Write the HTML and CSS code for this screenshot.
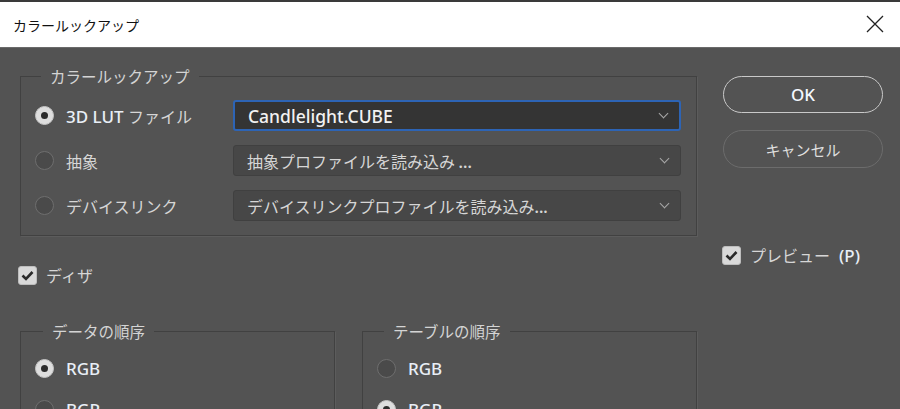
FILE: index.html
```html
<!DOCTYPE html>
<html lang="ja">
<head>
<meta charset="utf-8">
<title>カラールックアップ</title>
<link rel="stylesheet" href="styles.css">
</head>
<body>
<div class="titlebar">
  <span class="title">カラールックアップ</span>
  <svg class="close" width="18" height="18" viewBox="0 0 18 18"><path d="M1 1 L17 17 M17 1 L1 17" stroke="#222" stroke-width="1.3" fill="none"/></svg>
</div>
<div class="dialog">
  <div class="main">
    <fieldset class="group lut">
      <legend>カラールックアップ</legend>
      <div class="lut-grid">
        <label class="opt"><span class="radio on"></span><span><span class="lat">3D LUT </span>ファイル</span></label>
        <div class="select focus"><span class="lat">Candlelight.CUBE</span><span class="chev"></span></div>
        <label class="opt"><span class="radio"></span>抽象</label>
        <div class="select"><span>抽象プロファイルを読み込み <span class="lat dots">...</span></span><span class="chev"></span></div>
        <label class="opt"><span class="radio"></span>デバイスリンク</label>
        <div class="select"><span>デバイスリンクプロファイルを読み込み<span class="lat dots">...</span></span><span class="chev"></span></div>
      </div>
    </fieldset>
    <label class="check-row dither"><span class="checkbox"><svg width="13" height="11" viewBox="0 0 13 11"><path d="M1.5 5.5 L5 9 L11.5 2" stroke="#2a2a2a" stroke-width="2.6" fill="none"/></svg></span>ディザ</label>
    <div class="orders">
      <fieldset class="group order data">
        <legend>データの順序</legend>
        <label class="opt"><span class="radio on"></span><span class="lat">RGB</span></label>
        <label class="opt"><span class="radio"></span><span class="lat">BGR</span></label>
      </fieldset>
      <fieldset class="group order table">
        <legend>テーブルの順序</legend>
        <label class="opt"><span class="radio"></span><span class="lat">RGB</span></label>
        <label class="opt"><span class="radio on"></span><span class="lat">BGR</span></label>
      </fieldset>
    </div>
  </div>
  <div class="side">
    <button class="btn primary"><span class="lat">OK</span></button>
    <button class="btn">キャンセル</button>
    <label class="check-row preview"><span class="checkbox"><svg width="13" height="11" viewBox="0 0 13 11"><path d="M1.5 5.5 L5 9 L11.5 2" stroke="#2a2a2a" stroke-width="2.6" fill="none"/></svg></span>プレビュー<span class="lat">(P)</span></label>
  </div>
</div>
</body>
</html>
```
FILE: styles.css
```css
* { box-sizing: border-box; }
html, body { margin: 0; padding: 0; }
body {
  width: 900px;
  height: 409px;
  overflow: hidden;
  background: #535353;
  font-family: "Noto Sans CJK JP", "Noto Sans", sans-serif;
  font-size: 15px;
  color: #dcdcdc;
}
.lat { font-family: "Noto Sans", "Noto Sans CJK JP", sans-serif; }
.titlebar {
  height: 48px;
  background: #fff;
  border-top: 2px solid #3a3a3a;
  border-bottom: 1px solid #6a6a6a;
  display: flex;
  align-items: center;
  justify-content: space-between;
  padding: 0 16px 0 13px;
}
.title { font-size: 14px; color: #111; }
.close { display: block; margin-top: -2px; }

.dialog {
  display: flex;
  padding-left: 20px;
  gap: 25px;
}
.main { width: 677px; display: flex; flex-direction: column; }

.group {
  margin: 0;
  border: 1px solid #414141;
  box-shadow: 1px 1px 0 #5c5c5c;
  min-width: 0;
}
.group legend {
  margin-left: 6px;
  padding: 0 9px;
  line-height: 20px;
  font-size: 15.5px;
  color: #d4d4d4;
}
.lut {
  margin-top: 18px;
  padding: 14px 15px 14px 14px;
}
.lut-grid {
  display: grid;
  grid-template-columns: 198px 1fr;
  row-gap: 14px;
  align-items: center;
}
.opt {
  display: flex;
  align-items: center;
  gap: 12px;
  font-size: 16px;
  color: #d6d6d6;
}
.opt .lat { color: #e8eef6; font-weight: 500; font-size: 17px; }
.radio {
  width: 19px;
  height: 19px;
  border-radius: 50%;
  border: 1px solid #6e6e6e;
  background: #4a4a4a;
  flex: none;
  display: flex;
  align-items: center;
  justify-content: center;
}
.radio.on {
  background: #dedede;
  border-color: #c4c4c4;
}
.radio.on::after {
  content: "";
  width: 7px;
  height: 7px;
  border-radius: 50%;
  background: #2c2c2c;
}
.select {
  height: 31px;
  border: 1px solid #404040;
  border-radius: 3px;
  background: #474747;
  display: flex;
  align-items: center;
  justify-content: space-between;
  padding: 0 12px 0 13px;
  font-size: 16px;
  color: #d6d6d6;
}
.select.focus {
  border: 2px solid #2d64b5;
  background: #343434;
  color: #f2f2f2;
  padding-left: 13px;
}
.select.focus .lat { font-weight: 500; font-size: 17.5px; }
.select .dots { font-weight: 600; }
.chev {
  width: 7px;
  height: 7px;
  border-right: 1.5px solid #a8a8a8;
  border-bottom: 1.5px solid #a8a8a8;
  transform: rotate(45deg);
  margin-top: -4px;
}

.check-row {
  display: flex;
  align-items: center;
  gap: 9px;
  font-size: 16px;
  color: #d6d6d6;
}
.checkbox {
  width: 19px;
  height: 19px;
  border-radius: 3px;
  background: #d9d9d9;
  border: 1px solid #bdbdbd;
  display: flex;
  align-items: center;
  justify-content: center;
  flex: none;
}
.dither { margin: 29px 0 0 -2px; height: 20px; }

.orders {
  display: flex;
  gap: 27px;
  margin-top: 36px;
}
.order {
  padding: 16px 14px 14px 14px;
  display: flex;
  flex-direction: column;
  gap: 19px;
  height: 120px;
}
.order .opt { height: 22px; }
.data { width: 315px; }
.table { width: 335px; }
.order.data legend { margin-left: 8px; }
.order.table legend { margin-left: 7px; }

.side {
  width: 161px;
  display: flex;
  flex-direction: column;
  padding-top: 28px;
}
.btn {
  height: 37px;
  border-radius: 19px;
  background: transparent;
  border: 1.5px solid #c9c9c9;
  font-family: inherit;
  font-size: 15px;
  color: #dedede;
  padding: 0;
  margin-left: 1px;
}
.btn.primary .lat { color: #f4f8ff; font-weight: 500; font-size: 17px; }
.btn + .btn { margin-top: 17px; border-color: #6c6c6c; height: 38px; }
.preview { margin-top: 77px; height: 20px; }
.preview .lat { color: #e8eef6; font-weight: 500; font-size: 17px; }
```
